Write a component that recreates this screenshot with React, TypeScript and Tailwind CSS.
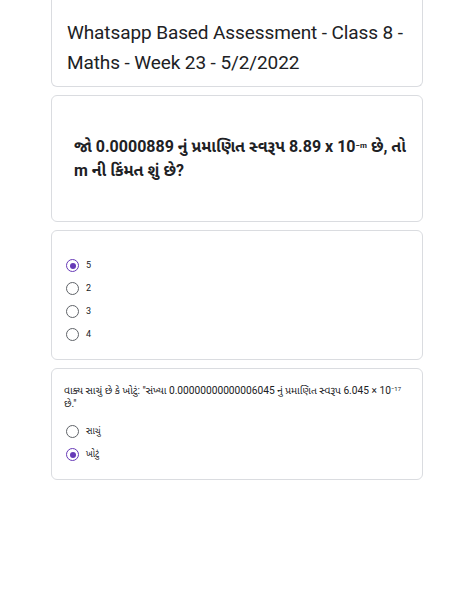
import React from "react";

function Radio({ checked }: { checked: boolean }) {
  return (
    <span
      className={`flex h-[13px] w-[13px] shrink-0 items-center justify-center rounded-full border-[1.5px] ${
        checked ? "border-[#673ab7]" : "border-[#5f6368]"
      }`}
    >
      {checked && <span className="h-[6px] w-[6px] rounded-full bg-[#673ab7]" />}
    </span>
  );
}

function Option({ label, checked }: { label: string; checked: boolean }) {
  return (
    <div className="flex h-[13px] items-center gap-[7px]">
      <Radio checked={checked} />
      <span className="text-[9px] leading-[13px] text-[#202124]">{label}</span>
    </div>
  );
}

export default function App() {
  const font = { fontFamily: "Roboto, 'Noto Sans', 'Noto Sans Gujarati', sans-serif" };
  return (
    <div className="min-h-[613px] w-[474px] bg-white" style={font}>
      <div className="flex flex-col gap-[8px] px-[51px] pb-8">
        <div className="-mt-2 rounded-b-[6px] border border-t-0 border-[#dadce0] pb-[8px] pl-[15px] pr-[4px] pt-[26px]">
          <h1 className="whitespace-nowrap text-[19px] leading-[30px] tracking-[-0.1px] text-[#202124]">
            Whatsapp Based Assessment - Class 8 -<br />
            Maths - Week 23 - 5/2/2022
          </h1>
        </div>

        <div className="flex h-[127px] items-center rounded-[6px] border border-[#dadce0] pl-[22px] pr-[10px]">
          <p className="text-[16px] font-bold leading-[24px] text-[#202124]">
            જો 0.0000889 નું પ્રમાણિત સ્વરૂપ 8.89 x 10
            <sup className="text-[8px] leading-none">−m</sup> છે, તો
            <br />
            m ની કિંમત શું છે?
          </p>
        </div>

        <div className="flex h-[130px] flex-col gap-[10px] rounded-[6px] border border-[#dadce0] px-[14px] pt-[28px]">
          <Option label="5" checked={true} />
          <Option label="2" checked={false} />
          <Option label="3" checked={false} />
          <Option label="4" checked={false} />
        </div>

        <div className="flex h-[112px] flex-col rounded-[6px] border border-[#dadce0] pl-[12px] pr-[4px] pt-[15px]">
          <p className="whitespace-nowrap text-[10.2px] leading-[13px] text-[#202124]">
            વાક્ય સાચું છે કે ખોટું: "સંખ્યા 0.00000000000006045 નું પ્રમાણિત સ્વરૂપ 6.045 × 10
            <sup className="text-[6px] leading-none">−17</sup>
            <br />
            છે."
          </p>
          <div className="mt-[15px] flex flex-col gap-[10px] pl-[2px]">
            <Option label="સાચું" checked={false} />
            <Option label="ખોટું" checked={true} />
          </div>
        </div>
      </div>
    </div>
  );
}
